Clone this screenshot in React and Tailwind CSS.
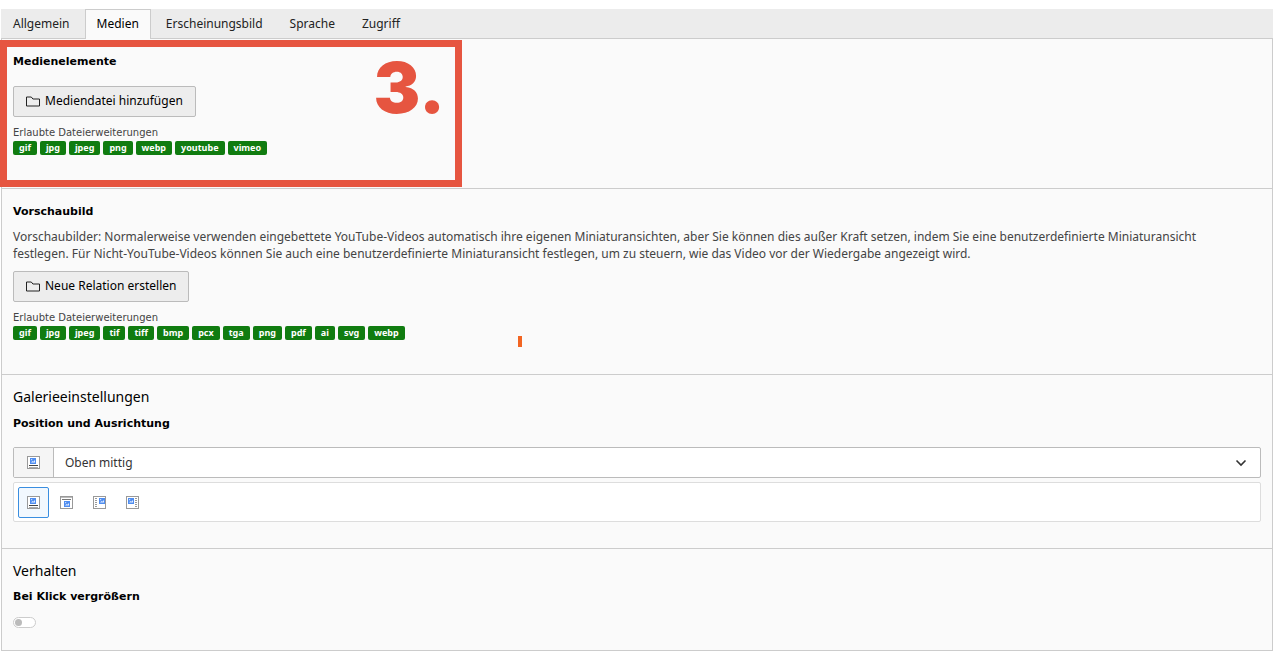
import { useState } from 'react';
import { clsx } from 'clsx';

const tabs = ['Allgemein', 'Medien', 'Erscheinungsbild', 'Sprache', 'Zugriff'];

const mediaExtensions = ['gif', 'jpg', 'jpeg', 'png', 'webp', 'youtube', 'vimeo'];
const previewExtensions = ['gif', 'jpg', 'jpeg', 'tif', 'tiff', 'bmp', 'pcx', 'tga', 'png', 'pdf', 'ai', 'svg', 'webp'];

const positions = [
  { value: 'above', label: 'Oben mittig' },
  { value: 'below', label: 'Unten mittig' },
  { value: 'right', label: 'Rechts vom Text' },
  { value: 'left', label: 'Links vom Text' },
];

const FolderIcon = () => (
  <svg className="w-[14px] h-[14px] shrink-0" viewBox="0 0 14 14" fill="none" stroke="#222" aria-hidden="true">
    <path d="M.5 12V3h4.8l1.600 2h6.600v7z" />
  </svg>
);

// image block inside the position icons
const Picture = ({ x, y }) => (
  <g transform={`translate(${x} ${y})`}>
    <rect width="6" height="6" fill="#4f8df0" />
    <path d="M1 4.500L2.500 3l.8.8L5 2v2.500z" fill="#e4eefe" />
    <rect x="1" y="1" width="1.200" height="1.200" fill="#c5dafb" />
  </g>
);

const PositionIcon = ({ type }) => (
  <svg className="w-[13px] h-[13px]" viewBox="0 0 13 13" aria-hidden="true">
    <rect x=".5" y=".5" width="12" height="12" fill="#fff" stroke="#999" />
    {type === 'above' && (
      <>
        <Picture x={3} y={2} />
        <path d="M2 9.500h9" stroke="#444" />
        <path d="M2 11.500h9" stroke="#aaa" />
      </>
    )}
    {type === 'below' && (
      <>
        <path d="M1 1.500h11" stroke="#bbb" />
        <path d="M2 3.500h9" stroke="#777" />
        <Picture x={4} y={5} />
      </>
    )}
    {type === 'right' && (
      <>
        <Picture x={6} y={2} />
        <path d="M2 2.500h2M2 4.500h2M2 6.500h2M2 8.500h2M2 10.500h2" stroke="#999" />
      </>
    )}
    {type === 'left' && (
      <>
        <Picture x={2} y={2} />
        <path d="M9 2.500h2M9 4.500h2M9 6.500h2M9 8.500h2M9 10.500h2" stroke="#999" />
      </>
    )}
  </svg>
);

const AddButton = ({ children }) => (
  <button type="button" className="flex items-center gap-[5px] h-[31px] px-3 pb-px rounded-xs border border-[#bbb] bg-[#ededed] text-black hover:bg-[#e2e2e2]">
    <FolderIcon />
    {children}
  </button>
);

const Extensions = ({ items }) => (
  <div className="mt-2">
    <p className="font-['DejaVu_Sans'] text-[10px] leading-4 text-[#444]">Erlaubte Dateierweiterungen</p>
    <ul className="flex flex-wrap gap-[3px]">
      {items.map(ext => (
        <li key={ext} className="h-[14px] px-1.5 rounded-xs bg-[#107c10] text-white text-[9px] leading-[13px] font-bold">{ext}</li>
      ))}
    </ul>
  </div>
);

const Title = ({ children, ...props }) => (
  <h3 className="font-['DejaVu_Sans'] text-[11px] leading-4 font-bold text-black" {...props}>{children}</h3>
);

const Section = ({ className, children }) => (
  <section className={clsx('px-[11px] border-b border-[#ccc]', className)}>{children}</section>
);

const App = () => {
  const [activeTab, setActiveTab] = useState('Medien');
  const [position, setPosition] = useState('above');
  const [zoom, setZoom] = useState(false);

  return (
    <div className="relative bg-white pt-[9px] pb-2 pl-px pr-[7px] font-['Noto_Sans',sans-serif] text-xs text-[#222]">
      {/* Tabs */}
      <div role="tablist" className="flex gap-[3px] h-[30px] bg-[#ececec] border-b border-[#ccc]">
        {tabs.map(tab => (
          <button key={tab} type="button" role="tab" aria-selected={activeTab === tab} onClick={() => setActiveTab(tab)}
            className={clsx('h-[30px] px-[11px] pb-0.5 border border-b-0', activeTab === tab ? 'bg-[#fafafa] border-[#ccc] text-black' : 'border-transparent')}>
            {tab}
          </button>
        ))}
      </div>

      <div className="border-x border-[#ccc] bg-[#fafafa]">
        {/* Media elements */}
        <Section className="h-[150px] pt-[15px]">
          <Title>Medienelemente</Title>
          <div className="mt-4">
            <AddButton>Mediendatei hinzufügen</AddButton>
          </div>
          <Extensions items={mediaExtensions} />
        </Section>

        {/* Preview image */}
        <Section className="h-[186px] pt-[15px]">
          <Title>Vorschaubild</Title>
          <p className="mt-2 mb-[9px] pr-8 leading-[17px] text-[#444]">
            Vorschaubilder: Normalerweise verwenden eingebettete YouTube-Videos automatisch ihre eigenen Miniaturansichten, aber Sie können dies außer Kraft setzen, indem Sie eine benutzerdefinierte Miniaturansicht festlegen. Für Nicht-YouTube-Videos können Sie auch eine benutzerdefinierte Miniaturansicht festlegen, um zu steuern, wie das Video vor der Wiedergabe angezeigt wird.
          </p>
          <AddButton>Neue Relation erstellen</AddButton>
          <Extensions items={previewExtensions} />
        </Section>

        {/* Gallery settings */}
        <Section className="h-[174px] pt-3">
          <h2 className="text-sm text-black">Galerieeinstellungen</h2>
          <div className="mt-[9px]">
            <Title id="position-label">Position und Ausrichtung</Title>
          </div>
          <div className="mt-[15px] flex h-[31px] rounded-xs border border-[#bbb] bg-white">
            <span className="flex w-10 items-center justify-center border-r border-[#bbb] bg-[#f5f5f5]">
              <PositionIcon type={position} />
            </span>
            <div className="relative flex-1">
              <select aria-labelledby="position-label" value={position} onChange={e => setPosition(e.target.value)}
                className="w-full h-full appearance-none bg-transparent pl-[11px] pr-8 text-[#333] outline-none">
                {positions.map(p => <option key={p.value} value={p.value}>{p.label}</option>)}
              </select>
              <svg className="pointer-events-none absolute right-3 top-2 w-[14px] h-[14px]" viewBox="0 0 14 14" fill="none" stroke="#333" strokeWidth="1.600" aria-hidden="true">
                <path d="M2.500 4.500L7 9l4.500-4.500" />
              </svg>
            </div>
          </div>
          <div className="mt-1 flex gap-[2px] h-10 p-1 rounded-xs border border-[#ddd] bg-white">
            {positions.map(p => (
              <button key={p.value} type="button" aria-label={p.label} onClick={() => setPosition(p.value)}
                className={clsx('flex w-[31px] h-[31px] items-center justify-center rounded-xs border', position === p.value ? 'border-[#3a8ee0] bg-[#f2f8fe]' : 'border-transparent')}>
                <PositionIcon type={p.value} />
              </button>
            ))}
          </div>
        </Section>

        {/* Behaviour */}
        <Section className="h-[102px] pt-3">
          <h2 className="text-sm text-black">Verhalten</h2>
          <div className="mt-2">
            <Title id="zoom-label">Bei Klick vergrößern</Title>
          </div>
          <input type="checkbox" role="switch" aria-labelledby="zoom-label" checked={zoom} onChange={e => setZoom(e.target.checked)}
            className="mt-3 block w-[23px] h-[11px] appearance-none rounded-full border border-[#ccc] bg-white before:block before:w-[7px] before:h-[7px] before:m-px before:rounded-full before:bg-[#bbb] checked:before:ml-[13px]" />
        </Section>
      </div>

      {/* Step marker */}
      <div className="pointer-events-none absolute left-0 top-10 w-[462px] h-[147px] border-[7px] border-[#e65540]">
        <span className="absolute right-2.5 top-1.5 font-['Inter'] text-[70px] leading-[70px] font-black text-[#e65540]">3.</span>
      </div>
      <span className="absolute left-[518px] top-[336px] w-1 h-[11px] bg-[#f26522]" />
    </div>
  );
};

export default App;
